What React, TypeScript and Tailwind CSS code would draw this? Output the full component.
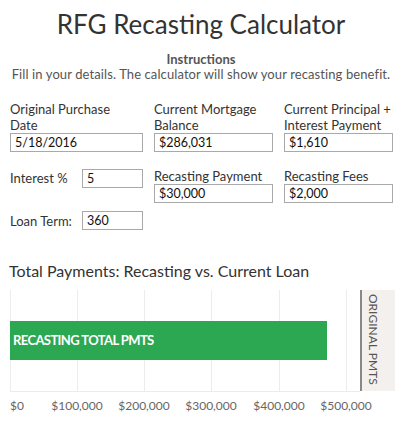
import React from "react";

const font = { fontFamily: "Lato, 'Open Sans', sans-serif" };

function Box({ value, className }: { value: string; className: string }) {
  return (
    <div
      className={`h-[19px] border border-[#a9a9a9] bg-white pl-[4px] text-[12.5px] leading-[17px] text-[#111] ${className}`}
    >
      {value}
    </div>
  );
}

export default function App() {
  const ticks = ["$0", "$100,000", "$200,000", "$300,000", "$400,000", "$500,000"];
  const gx = [10, 77, 144, 211, 279, 346];
  return (
    <div className="relative h-[421px] w-[402px] overflow-hidden bg-white" style={font}>
      <div className="pt-[8px] text-center text-[26px] leading-[32px] text-[#333]">RFG Recasting Calculator</div>
      <div className="mt-[12px] text-center text-[13px] font-bold leading-[15px] text-[#555]">Instructions</div>
      <div className="text-center text-[13px] tracking-[0.1px] leading-[15px] text-[#555]">
        Fill in your details. The calculator will show your recasting benefit.
      </div>

      <div className="mt-[19px] flex pl-[10px] text-[13px] leading-[16px] text-[#333]">
        <div className="flex w-[144px] flex-col">
          <div className="h-[32px]">Original Purchase<br />Date</div>
          <Box value="5/18/2016" className="w-[133px]" />
          <div className="mt-[17px] flex items-start">
            <div className="w-[72px] pt-[1px]">Interest %</div>
            <Box value="5" className="w-[61px]" />
          </div>
          <div className="mt-[23px] flex items-start">
            <div className="w-[72px] pt-[2px]">Loan Term:</div>
            <Box value="360" className="w-[61px]" />
          </div>
        </div>
        <div className="flex w-[130px] flex-col">
          <div className="h-[32px]">Current Mortgage<br />Balance</div>
          <Box value="$286,031" className="w-[119px]" />
          <div className="mt-[16px] h-[16px]">Recasting Payment</div>
          <Box value="$30,000" className="w-[119px]" />
        </div>
        <div className="flex w-[110px] flex-col">
          <div className="h-[32px]">Current Principal +<br />Interest Payment</div>
          <Box value="$1,610" className="w-[109px]" />
          <div className="mt-[16px] h-[16px]">Recasting Fees</div>
          <Box value="$2,000" className="w-[109px]" />
        </div>
      </div>

      <div className="mt-[31px] pl-[9px] text-[16px] leading-[20px] text-[#333]">
        Total Payments: Recasting vs. Current Loan
      </div>

      <div className="relative mt-[9px] h-[101px] w-[402px]">
        {gx.map((x) => (
          <div key={x} className="absolute top-0 h-[101px] w-px bg-[#ececec]" style={{ left: x }} />
        ))}
        <div className="absolute left-[10px] top-[101px] h-px w-[350px] bg-[#ececec]" />
        <div className="absolute left-[10px] top-[31px] flex h-[39px] w-[317px] items-center bg-[#2ca852] pl-[3px] text-[13px] font-bold tracking-[-0.6px] text-white">
          RECASTING TOTAL PMTS
        </div>
        <div className="absolute left-[360px] top-0 h-[101px] w-[35px] border-l-2 border-[#888] bg-[#f4f0ee]">
          <div
            className="pl-[4px] pt-[4px] text-[12px] leading-[14px] text-[#555]"
            style={{ writingMode: "vertical-rl" }}
          >
            ORIGINAL PMTS
          </div>
        </div>
      </div>

      <div className="relative h-[30px] text-[12px] text-[#666]">
        {ticks.map((t, i) => (
          <div
            key={t}
            className="absolute top-[8px] leading-[14px]"
            style={i === 0 ? { left: 10 } : { left: gx[i], transform: "translateX(-50%)" }}
          >
            {t}
          </div>
        ))}
      </div>
    </div>
  );
}
